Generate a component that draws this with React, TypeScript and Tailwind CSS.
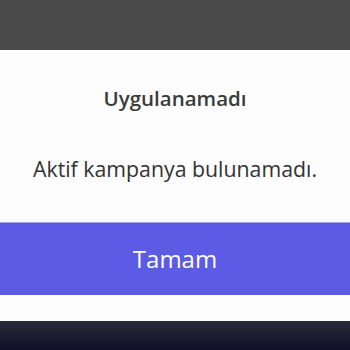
import React from "react";

export default function App() {
  return (
    <div
      className="w-[350px] h-[350px] flex flex-col overflow-hidden bg-[#4a4a4a]"
      style={{ fontFamily: '"Open Sans", sans-serif' }}
    >
      <div className="h-[50px] shrink-0" />
      <div className="flex flex-col bg-[#fdfdfd]">
        <h1 className="pt-[35px] text-center text-[20.5px] font-semibold text-[#3a3a3a] leading-[26px]">
          Uygulanamadı
        </h1>
        <p className="pt-[44px] text-center text-[21.3px] text-[#333333] leading-[28px]">
          Aktif kampanya bulunamadı.
        </p>
        <button
          type="button"
          className="mt-[39px] h-[73px] w-full bg-[#5b5be6] text-white text-[24px] border-t border-[#a7a7f0]"
        >
          Tamam
        </button>
        <div className="h-[26px]" />
      </div>
      <div className="flex-1 bg-gradient-to-b from-[#2b2a36] to-[#10102a]" />
    </div>
  );
}
